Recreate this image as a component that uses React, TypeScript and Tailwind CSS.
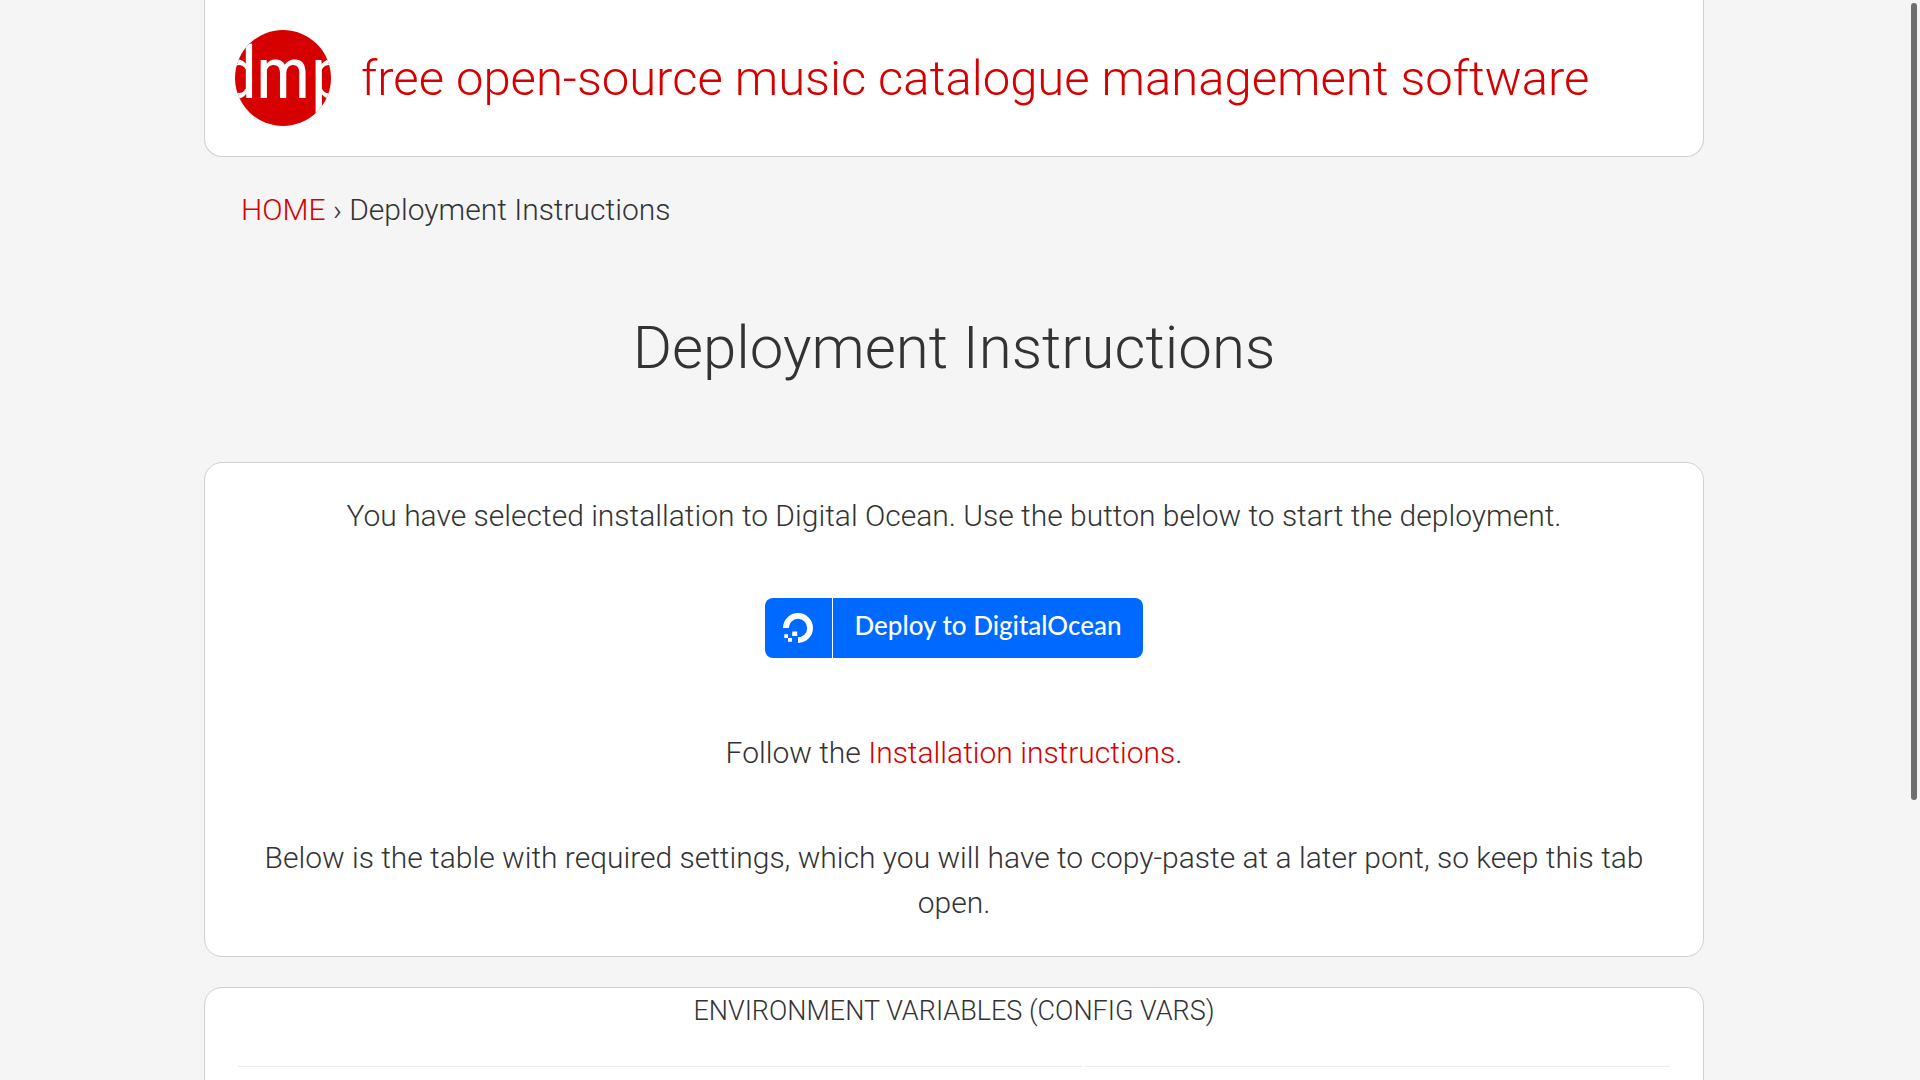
import React from "react";

function Logo() {
  return (
    <svg viewBox="0 0 96 96" className="size-24 shrink-0" role="img" aria-label="dmp">
      <defs>
        <clipPath id="disc">
          <circle cx="48" cy="48" r="48" />
        </clipPath>
      </defs>
      <circle cx="48" cy="48" r="48" fill="#d70000" />
      <g
        clipPath="url(#disc)"
        fill="#fff"
        fontFamily="'Roboto Condensed', 'Liberation Sans Narrow', Roboto, sans-serif"
        fontSize="72"
        fontWeight="400"
      >
        <text x="22" y="68" textAnchor="end">d</text>
        <text x="48" y="68" textAnchor="middle">m</text>
        <text x="76" y="68">p</text>
      </g>
    </svg>
  );
}

function OceanMark() {
  return (
    <svg viewBox="0 0 30 30" className="size-[30px]" fill="#fff" aria-hidden="true">
      <path d="M15 30v-5.800a9.200 9.200 0 1 0-9.200-9.200H0a15 15 0 1 1 15 15Z" />
      <path d="M9.200 18.500H14.200V23H9.200ZM5 25h4v3.800H5ZM1.300 21.300h3.700V25H1.300Z" />
    </svg>
  );
}

function Card({ className, children }: { className: string; children: React.ReactNode }) {
  return <section className={`border border-[#d0d0d0] bg-white ${className}`}>{children}</section>;
}

export default function App() {
  return (
    <div className="h-screen overflow-hidden bg-[#f5f5f5] pr-3 font-['Roboto',sans-serif] text-[30px] leading-[45px] font-light text-[#333]">
      <div className="mx-auto max-w-[1500px]">
        <header className="flex items-center gap-[30px] rounded-b-[18px] border border-t-0 border-[#d0d0d0] bg-white px-[30px] py-[30px]">
          <Logo />
          <a href="#home" className="pt-[2px] text-[49px] leading-[60px] text-[#d70000]">
            free open-source music catalogue management software
          </a>
        </header>

        <nav aria-label="Breadcrumb" className="px-[37px] pt-[30px]">
          <a href="#home" className="text-[#d70000]">HOME</a> › Deployment Instructions
        </nav>

        <h1 className="pt-[81px] pb-[79px] text-center text-[60px] leading-[70px]">Deployment Instructions</h1>

        <main>
          <Card className="rounded-[18px] px-[30px] pt-[30px] pb-[31px] text-center">
            <p>You have selected installation to Digital Ocean. Use the button below to start the deployment.</p>
            <a
              href="#deploy"
              className="mx-auto mt-[60px] flex h-[60px] w-[378px] overflow-hidden rounded-lg bg-[#0069ff] font-['Lato',sans-serif] text-[26px] font-medium text-white"
            >
              <span className="flex w-[68px] items-center justify-center border-r border-white pr-[2px]">
                <OceanMark />
              </span>
              <span className="flex-1 text-center leading-[54px]">Deploy to DigitalOcean</span>
            </a>
            <p className="mt-[72px]">
              Follow the <a href="#installation" className="text-[#d70000]">Installation instructions</a>.
            </p>
            <p className="mt-[60px]">
              Below is the table with required settings, which you will have to copy-paste at a later pont, so keep
              this tab open.
            </p>
          </Card>

          <Card className="mt-[30px] rounded-t-[18px] px-[31px] pb-[30px]">
            <table className="w-full border-separate border-spacing-[2px]">
              <caption className="pt-px pb-[30px] text-[27px]">ENVIRONMENT VARIABLES (CONFIG VARS)</caption>
              <tbody>
                <tr>
                  <td className="h-[60px] w-[59%] border-t border-[#eee]" />
                  <td className="h-[60px] border-t border-[#eee]" />
                </tr>
              </tbody>
            </table>
          </Card>
        </main>
      </div>
      <div aria-hidden="true" className="fixed top-[3px] right-[3px] h-[797px] max-h-[74%] w-[6px] rounded-full bg-[#6e6e6e]" />
    </div>
  );
}
